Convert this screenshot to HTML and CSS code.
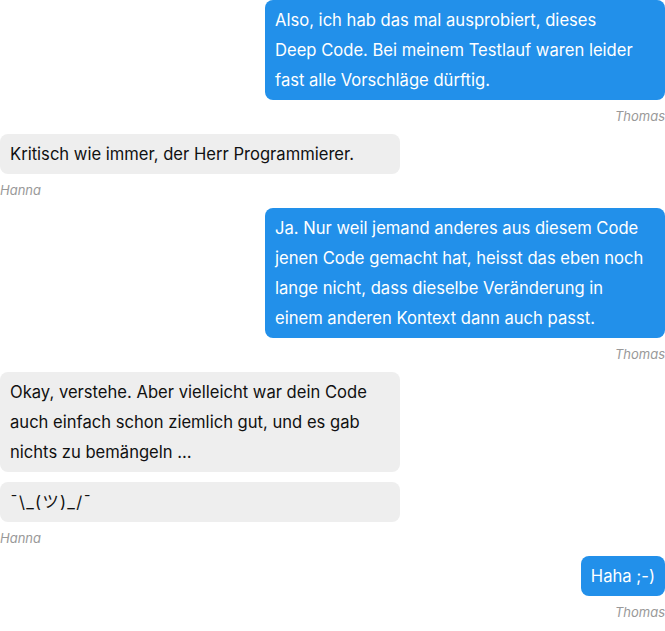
FILE: index.html
```html
<!DOCTYPE html>
<html lang="de">
<head>
<meta charset="utf-8">
<link rel="stylesheet" href="styles.css">
</head>
<body>
<div class="chat">
  <div class="group right">
    <div class="bubble out">Also, ich hab das mal ausprobiert, dieses<br>Deep Code. Bei meinem Testlauf waren leider fast alle Vorschläge dürftig.</div>
    <div class="name">Thomas</div>
  </div>
  <div class="group left">
    <div class="bubble in wide">Kritisch wie immer, der Herr Programmierer.</div>
    <div class="name">Hanna</div>
  </div>
  <div class="group right">
    <div class="bubble out">Ja. Nur weil jemand anderes aus diesem Code jenen Code gemacht hat, heisst das eben noch lange nicht, dass dieselbe Veränderung in einem anderen Kontext dann auch passt.</div>
    <div class="name">Thomas</div>
  </div>
  <div class="group left">
    <div class="bubble in wide">Okay, verstehe. Aber vielleicht war dein Code auch einfach schon ziemlich gut, und es gab nichts zu bemängeln …</div>
    <div class="bubble in wide"><span class="shrug">¯\_(ツ)_/¯</span></div>
    <div class="name">Hanna</div>
  </div>
  <div class="group right">
    <div class="bubble out">Haha ;-)</div>
    <div class="name">Thomas</div>
  </div>
</div>
</body>
</html>
```
FILE: styles.css
```css
html, body {
  margin: 0;
  padding: 0;
  background: #ffffff;
}
body {
  font-family: Inter, "Noto Sans CJK JP", sans-serif;
  font-size: 16.6px;
  color: #111111;
}
.chat {
  display: flex;
  flex-direction: column;
  width: 665px;
}
.group {
  display: flex;
  flex-direction: column;
  gap: 10px;
}
.group.right {
  align-items: flex-end;
}
.group.left {
  align-items: flex-start;
}
.bubble {
  max-width: 400px;
  box-sizing: border-box;
  padding: 5px 10px;
  line-height: 30px;
  border-radius: 8px;
}
.bubble.wide {
  width: 400px;
}
.bubble.out {
  background: #2290ea;
  color: #ffffff;
}
.bubble.in {
  background: #eeeeee;
  color: #111111;
}
.shrug {
  letter-spacing: 1.2px;
}
.name {
  font-size: 13px;
  font-style: italic;
  color: #999999;
  line-height: 24px;
  margin-top: -6px;
  padding-bottom: 6px;
}
```
